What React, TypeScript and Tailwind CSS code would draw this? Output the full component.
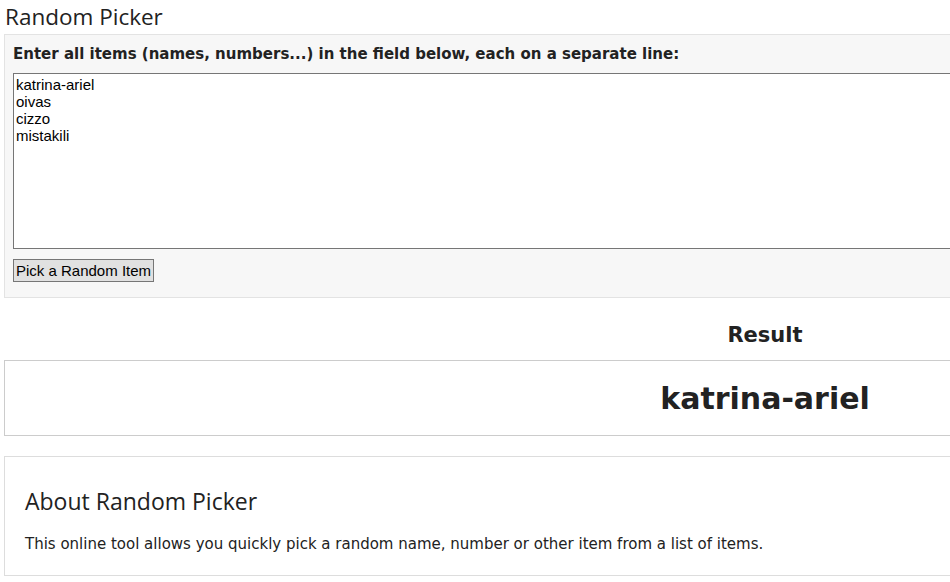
import React from 'react';

const items = ['katrina-ariel', 'oivas', 'cizzo', 'mistakili'];

const App = () => {
  return (
    <div className="w-[950px] h-[582px] overflow-hidden bg-white text-[#222]">
      <div className="w-[1526px] pl-[4px]">
        <h1 className="text-[22.5px] leading-[34px] pl-[1px] font-normal text-[#222] font-['Segoe_UI','Open_Sans',sans-serif]">
          Random Picker
        </h1>

        {/* Input panel */}
        <div className="bg-[#f7f7f7] border border-[#e3e3e3] pt-[10px] pb-[15px] px-[8px]">
          <p className="text-[15px] font-bold leading-[18px] mb-[10px] text-[#222] font-['DejaVu_Sans',Verdana,sans-serif]">
            Enter all items (names, numbers...) in the field below, each on a separate line:
          </p>
          <textarea
            defaultValue={items.join('\n')}
            className="block w-full h-[176px] bg-white border border-[#767676] px-[2px] py-[2px] text-[15px] leading-[17px] text-black resize-none outline-none font-['Liberation_Sans',Arial,sans-serif]"
          />
          <button className="mt-[10px] h-[23px] px-[2px] bg-[#e1e1e1] border border-[#767676] text-[15px] leading-[20px] text-black font-['Liberation_Sans',Arial,sans-serif]">
            Pick a Random Item
          </button>
        </div>

        {/* Result */}
        <h2 className="mt-[22px] text-center text-[21px] font-bold leading-[30px] text-[#222] font-['DejaVu_Sans',Verdana,sans-serif]">
          Result
        </h2>
        <div className="mt-[10px] h-[76px] border border-[#cccccc] flex items-center justify-center">
          <span className="text-[30px] font-bold text-[#222] font-['DejaVu_Sans',Verdana,sans-serif]">
            katrina-ariel
          </span>
        </div>

        {/* About */}
        <div className="mt-[20px] border border-[#dddddd] px-[20px] pt-[29px] pb-[21px]">
          <h3 className="text-[23px] leading-[30px] font-normal text-[#222] font-['Segoe_UI','Open_Sans',sans-serif]">
            About Random Picker
          </h3>
          <p className="mt-[18px] text-[15px] leading-[20px] text-[#222] font-['DejaVu_Sans',Verdana,sans-serif]">
            This online tool allows you quickly pick a random name, number or other item from a list of items.
          </p>
        </div>
      </div>
    </div>
  );
};

export default App;
